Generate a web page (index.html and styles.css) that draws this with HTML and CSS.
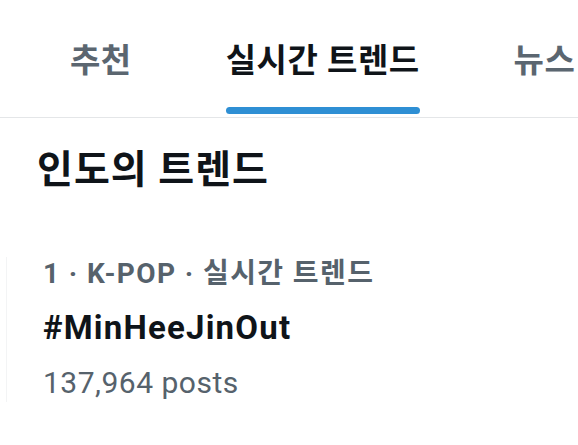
FILE: index.html
```html
<!DOCTYPE html>
<html lang="ko">
<head>
  <meta charset="UTF-8" />
  <meta name="viewport" content="width=device-width, initial-scale=1.0" />
  <title>실시간 트렌드</title>
  <link rel="stylesheet" href="styles.css">
</head>
<body>
  <nav class="tabs">
    <div class="tab">추천</div>
    <div class="tab active">실시간 트렌드</div>
    <div class="tab">뉴스</div>
  </nav>

  <section class="trends">
    <h1 class="trends-title">인도의 트렌드</h1>

    <div class="trend">
      <div class="trend-meta">1 · K-POP · 실시간 트렌드</div>
      <div class="trend-name">#MinHeeJinOut</div>
      <div class="trend-count">137,964 posts</div>
    </div>
  </section>
</body>
</html>
```

FILE: styles.css
```css
body {
  margin: 0;
  font-family: Roboto, "Noto Sans CJK KR", sans-serif;
  background: #fff;
  color: #0f1419;
  overflow: hidden;
}

/* Tabs */
.tabs {
  display: flex;
  gap: 94px;
  padding-left: 70px;
  height: 117px;
  border-bottom: 1px solid #e4e6e8;
  white-space: nowrap;
  overflow: hidden;
}
.tab {
  padding-top: 41px;
  font-size: 33px;
  line-height: 40px;
  letter-spacing: 0.5px;
  font-weight: 700;
  color: #5b6670;
}
.tab.active {
  color: #0f1419;
}
.tab.active::after {
  content: "";
  display: block;
  height: 7px;
  margin-top: 26px;
  border-radius: 4px;
  background: #2e8fd4;
}

/* Trends */
.trends-title {
  margin: 29px 0 0;
  padding-left: 37px;
  font-size: 39px;
  line-height: 46px;
  letter-spacing: 1px;
  font-weight: 700;
}
.trend {
  margin: 64px 0 0 6px;
  padding-left: 36px;
  border-left: 1px solid #f3f4f5;
}
.trend-meta {
  font-size: 28px;
  line-height: 34px;
  letter-spacing: 1.4px;
  font-weight: 700;
  color: #56626c;
}
.trend-name {
  margin-top: 17px;
  font-size: 33px;
  line-height: 40px;
  letter-spacing: 1.2px;
  font-weight: 700;
}
.trend-count {
  margin-top: 16px;
  font-size: 30px;
  line-height: 38px;
  letter-spacing: 0.5px;
  color: #56626c;
}
```
